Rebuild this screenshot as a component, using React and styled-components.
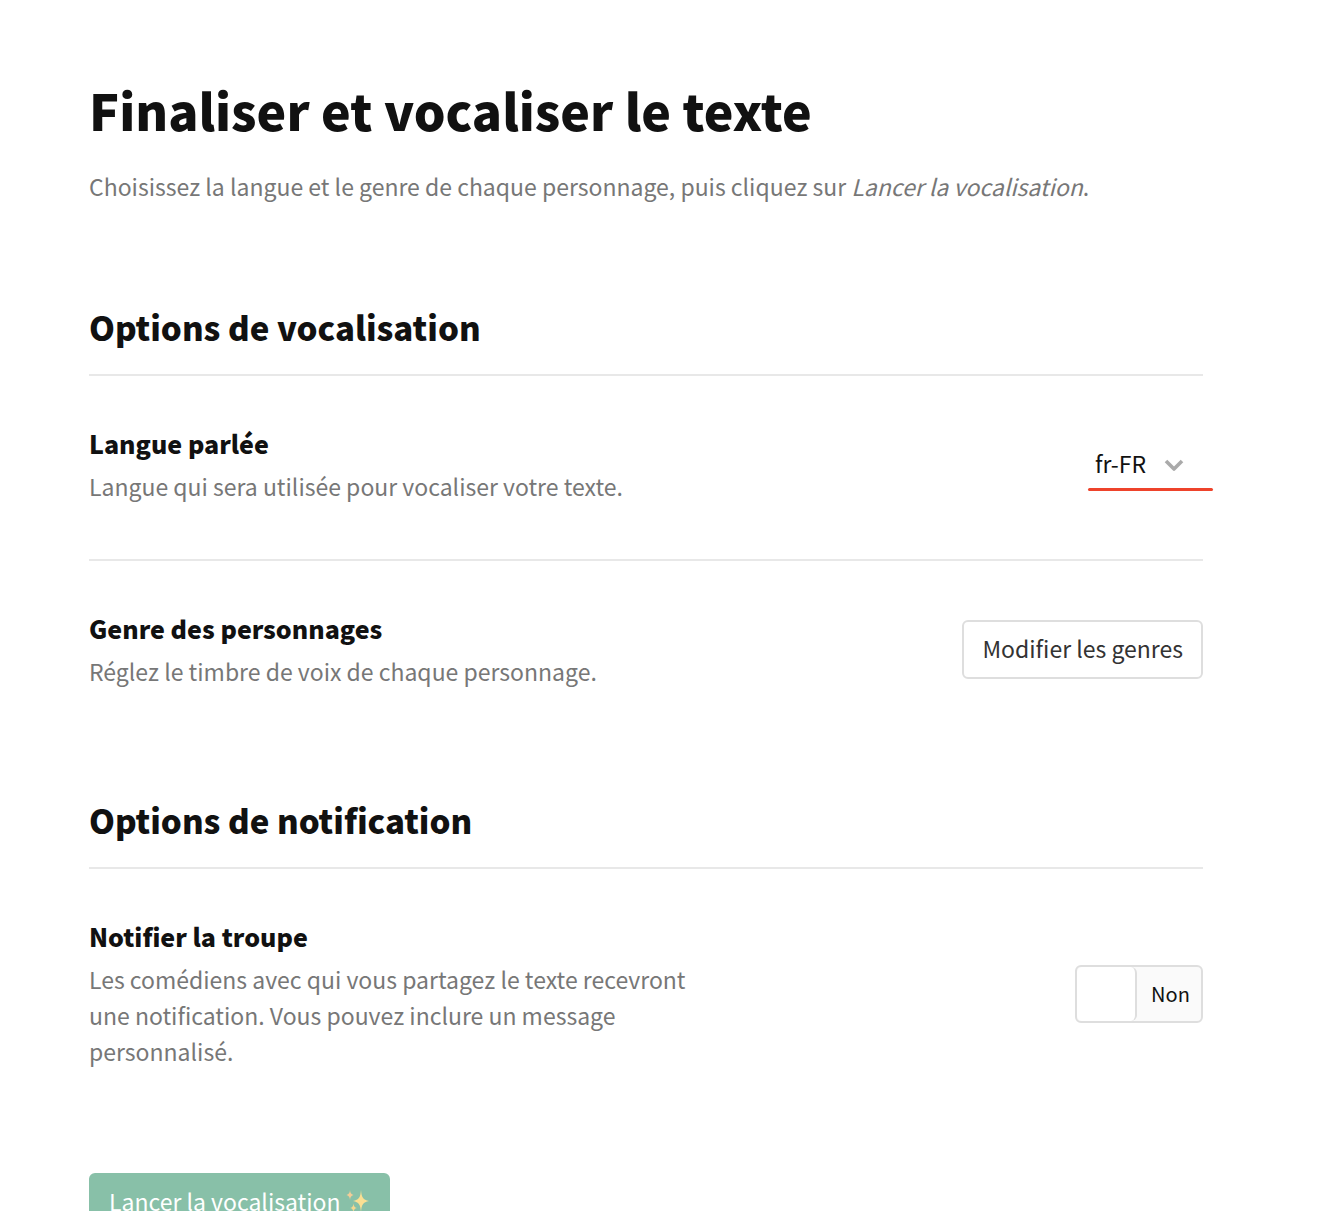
import React, { useState } from "react";
import styled, { createGlobalStyle } from "styled-components";

const GlobalStyle = createGlobalStyle`
  *, *::before, *::after { box-sizing: border-box; }
  body {
    margin: 0;
    background: #fff;
    color: #111;
    font-family: "Noto Sans CJK JP", "Noto Sans", sans-serif;
    font-size: 23px;
    line-height: 36px;
  }
  h1, h2, h3, p { margin: 0; }
  h1, h2, h3 { font-weight: 900; }
  button, select, input { font: inherit; color: inherit; margin: 0; }
`;

const Page = styled.main`
  padding: 72px 137px 48px 89px;
`;

const Title = styled.h1`
  font-size: 50px;
  line-height: 74px;
`;

const Intro = styled.p`
  margin-top: 22px;
  color: #777;
`;

const Section = styled.section`
  margin-top: ${(p) => (p.$first ? 96 : 49)}px;
`;

const SectionTitle = styled.h2`
  padding-bottom: 20px;
  border-bottom: 2px solid #e8e8e8;
  font-size: 33px;
  line-height: 54px;
`;

const Row = styled.div`
  display: flex;
  align-items: center;
  justify-content: space-between;
  gap: 32px;
  padding: 49px 0 55px;

  & + & {
    border-top: 2px solid #e8e8e8;
  }
`;

const RowText = styled.div`
  max-width: 608px;
`;

const RowTitle = styled.h3`
  margin-bottom: 7px;
  font-size: 25px;
  line-height: 36px;
`;

const Description = styled.p`
  color: #777;
`;

const SelectField = styled.div`
  position: relative;
  flex: none;

  &::after {
    content: "";
    position: absolute;
    left: 0;
    right: -10px;
    bottom: 0;
    height: 3px;
    border-radius: 2px;
    background: #ee432b;
  }
`;

const Select = styled.select`
  appearance: none;
  display: block;
  width: 115px;
  height: 53px;
  padding: 0 48px 3px 7px;
  border: 0;
  background: transparent;
  cursor: pointer;
`;

const Chevron = styled.svg`
  position: absolute;
  top: 19px;
  right: 18px;
  pointer-events: none;
`;

const Button = styled.button`
  flex: none;
  padding: 8px 18px 11px;
  border: 2px solid ${(p) => (p.$primary ? "#88c0a8" : "#dedede")};
  border-radius: 6px;
  background: ${(p) => (p.$primary ? "#88c0a8" : "#fff")};
  color: ${(p) => (p.$primary ? "#fff" : "#333")};
  cursor: pointer;
`;

const LaunchButton = styled(Button)`
  display: flex;
  align-items: center;
  gap: 5px;
  margin-top: 49px;
`;

const Toggle = styled.label`
  display: flex;
  flex: none;
  flex-direction: ${(p) => (p.$on ? "row-reverse" : "row")};
  align-items: center;
  width: 128px;
  height: 58px;
  border: 2px solid #dedede;
  border-radius: 6px;
  background: #fafafa;
  font-size: 20px;
  cursor: pointer;
  overflow: hidden;
`;

const ToggleKnob = styled.input`
  appearance: none;
  width: 60px;
  height: 100%;
  border-right: 2px solid #dedede;
  border-radius: 6px;
  background: #fff;
  cursor: pointer;
`;

const ToggleText = styled.span`
  flex: 1;
  padding-left: 3px;
  text-align: center;
`;

function Sparkles() {
  return (
    <svg width="24" height="26" viewBox="0 0 24 26" fill="#fbdf93" aria-hidden="true">
      <path d="M15 2C15.600 9.500 17 11.800 23 13 17 14.200 15.600 16.500 15 24 14.400 16.500 13 14.200 7 13 13 11.800 14.400 9.500 15 2Z" />
      <path d="M4 2C4.300 5 5 6.200 7.500 7 5 7.800 4.300 9 4 12 3.700 9 3 7.800.5 7 3 6.200 3.700 5 4 2Z" fill="#f3cd98" />
      <path d="M7.500 15.500C7.800 18.200 8.500 19.300 10.800 20 8.500 20.700 7.800 21.800 7.500 24.500 7.200 21.800 6.500 20.700 4.200 20 6.500 19.300 7.200 18.200 7.500 15.500Z" fill="#f8d78f" />
    </svg>
  );
}

export default function App() {
  const [language, setLanguage] = useState("fr-FR");
  const [notify, setNotify] = useState(false);

  return (
    <>
      <GlobalStyle />
      <Page>
        <Title>Finaliser et vocaliser le texte</Title>
        <Intro>
          Choisissez la langue et le genre de chaque personnage, puis cliquez sur{" "}
          <em>Lancer la vocalisation</em>.
        </Intro>

        <Section $first>
          <SectionTitle>Options de vocalisation</SectionTitle>
          <Row>
            <RowText>
              <RowTitle>
                <label htmlFor="language">Langue parlée</label>
              </RowTitle>
              <Description>Langue qui sera utilisée pour vocaliser votre texte.</Description>
            </RowText>
            <SelectField>
              <Select id="language" value={language} onChange={(e) => setLanguage(e.target.value)}>
                <option>fr-FR</option>
              </Select>
              <Chevron width="22" height="16" viewBox="0 0 22 16" fill="none" aria-hidden="true">
                <path
                  d="M3 4 11 12 19 4"
                  stroke="#aaa"
                  strokeWidth="3.600"
                  strokeLinejoin="round"
                />
              </Chevron>
            </SelectField>
          </Row>
          <Row>
            <RowText>
              <RowTitle>Genre des personnages</RowTitle>
              <Description>Réglez le timbre de voix de chaque personnage.</Description>
            </RowText>
            <Button type="button">Modifier les genres</Button>
          </Row>
        </Section>

        <Section>
          <SectionTitle>Options de notification</SectionTitle>
          <Row>
            <RowText>
              <RowTitle>
                <label htmlFor="notify">Notifier la troupe</label>
              </RowTitle>
              <Description>
                Les comédiens avec qui vous partagez le texte recevront une notification. Vous
                pouvez inclure un message personnalisé.
              </Description>
            </RowText>
            <Toggle $on={notify}>
              <ToggleKnob
                id="notify"
                type="checkbox"
                checked={notify}
                onChange={(e) => setNotify(e.target.checked)}
              />
              <ToggleText>{notify ? "Oui" : "Non"}</ToggleText>
            </Toggle>
          </Row>
        </Section>

        <LaunchButton type="button" $primary>
          Lancer la vocalisation
          <Sparkles />
        </LaunchButton>
      </Page>
    </>
  );
}
